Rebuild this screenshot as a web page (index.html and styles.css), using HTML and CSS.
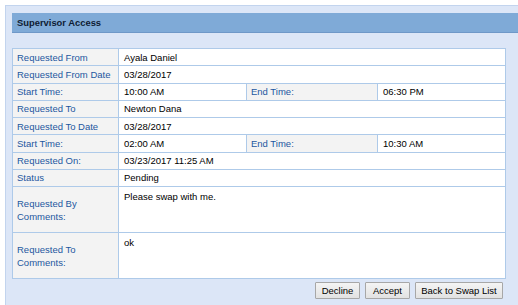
FILE: index.html
```html
<!DOCTYPE html>
<html>
<head>
<meta charset="utf-8">
<link rel="stylesheet" href="styles.css">
</head>
<body>
<div class="frame">
  <div class="panel">
    <div class="header">Supervisor Access</div>
    <div class="content">
      <table class="details">
        <colgroup>
          <col class="c1"><col class="c2"><col class="c3"><col class="c4">
        </colgroup>
        <tr><td class="lbl">Requested From</td><td class="val" colspan="3">Ayala Daniel</td></tr>
        <tr><td class="lbl">Requested From Date</td><td class="val" colspan="3">03/28/2017</td></tr>
        <tr><td class="lbl">Start Time:</td><td class="val">10:00 AM</td><td class="lbl">End Time:</td><td class="val">06:30 PM</td></tr>
        <tr><td class="lbl">Requested To</td><td class="val" colspan="3">Newton Dana</td></tr>
        <tr><td class="lbl">Requested To Date</td><td class="val" colspan="3">03/28/2017</td></tr>
        <tr><td class="lbl">Start Time:</td><td class="val">02:00 AM</td><td class="lbl">End Time:</td><td class="val">10:30 AM</td></tr>
        <tr><td class="lbl">Requested On:</td><td class="val" colspan="3">03/23/2017 11:25 AM</td></tr>
        <tr><td class="lbl">Status</td><td class="val" colspan="3">Pending</td></tr>
        <tr class="tall"><td class="lbl">Requested By<br>Comments:</td><td class="val top" colspan="3">Please swap with me.</td></tr>
        <tr class="tall"><td class="lbl">Requested To<br>Comments:</td><td class="val top" colspan="3">ok</td></tr>
      </table>
      <div class="actions">
        <button class="btn b1">Decline</button>
        <button class="btn b2">Accept</button>
        <button class="btn b3">Back to Swap List</button>
      </div>
    </div>
  </div>
</div>
</body>
</html>
```
FILE: styles.css
```css
html, body {
  margin: 0;
  padding: 0;
  background: #ffffff;
  width: 518px;
  height: 305px;
  overflow: hidden;
  font-family: "Liberation Sans", Arial, sans-serif;
  font-size: 9.5px;
}
.frame {
  padding: 2px 0 0 0;
  height: 303px;
}
.panel {
  margin: 3px 0 0 5px;
  border-top: 1px solid #c2d4ee;
  border-left: 1px solid #c2d4ee;
  background: #dce6f7;
  padding: 7px 0 0 6px;
  height: 300px;
  box-sizing: border-box;
}
.header {
  height: 20px;
  line-height: 20px;
  background: #7faad7;
  border-bottom: 1px solid #6f98c8;
  box-sizing: border-box;
  padding-left: 5px;
  font-weight: bold;
  color: #0e1c33;
  font-size: 9.4px;
}
.content {
  padding: 15px 13px 0 0;
}
.details {
  width: 493px;
  border-collapse: collapse;
  border: 1px solid #9dbde6;
  table-layout: fixed;
}
.c1 { width: 106px; }
.c2 { width: 128px; }
.c3 { width: 131px; }
.c4 { width: 128px; }
.details td {
  border: 1px solid #aecae9;
  height: 16.25px;
  padding: 0 4px;
  vertical-align: middle;
  white-space: nowrap;
}
.details td.lbl {
  background: #f3f3f3;
  color: #1d57a0;
}
.details td.val {
  background: #ffffff;
  color: #000000;
  padding-left: 5px;
}
.details tr.tall td {
  height: 42px;
  line-height: 13px;
}
.details td.top {
  vertical-align: top;
  padding-top: 3px;
}
.actions {
  display: flex;
  justify-content: flex-end;
  gap: 5px;
  margin-top: 3px;
  padding-right: 2px;
}
.btn {
  height: 17px;
  padding: 0;
  font-family: "Liberation Sans", Arial, sans-serif;
  font-size: 9.5px;
  color: #000;
  background: linear-gradient(#f4f4f4, #e2e2e2);
  border: 1px solid #a7a7a7;
  border-radius: 1px;
}
.b1 { width: 45px; }
.b2 { width: 45px; }
.b3 { width: 88px; }
```
